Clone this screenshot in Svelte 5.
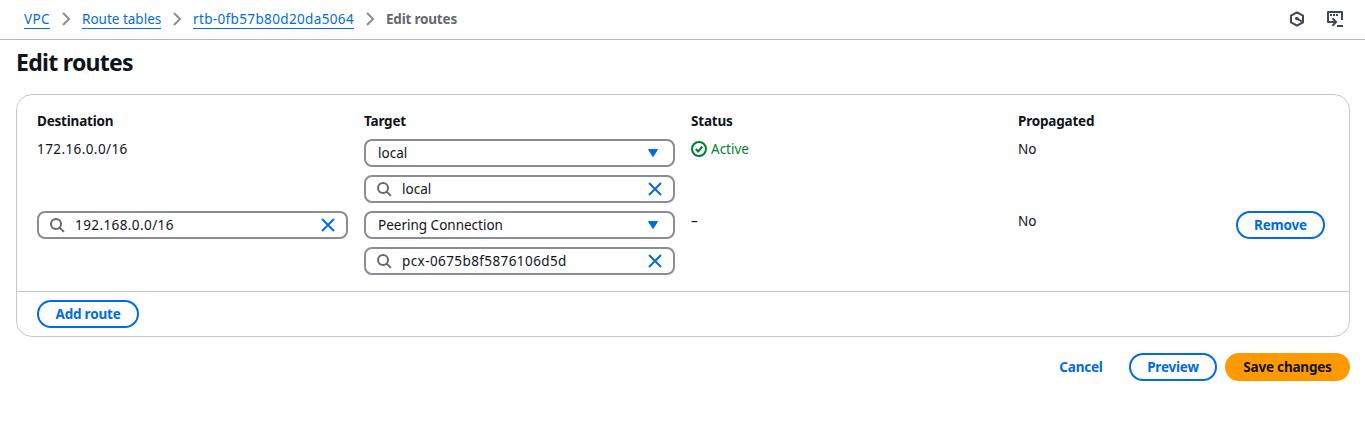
<script>
  const crumbs = [
    { label: 'VPC', cls: 'c1' },
    { label: 'Route tables', cls: 'c2' },
    { label: 'rtb-0fb57b80d20da5064', cls: 'c3' },
  ];
  const routes = [
    { destination: '172.16.0.0/16', editable: false, type: 'local', target: 'local', active: true, propagated: 'No' },
    { destination: '192.168.0.0/16', editable: true, type: 'Peering Connection', target: 'pcx-0675b8f5876106d5d', active: false, propagated: 'No' },
  ];
</script>

{#snippet search(value)}
  <div class="field">
    <svg class="glass" width="16" height="16" viewBox="0 0 16 16" fill="none" stroke="#656871" stroke-width="2"><circle cx="7" cy="7" r="5" /><path d="m10.6 10.6 4.3 4.3" /></svg>
    <span class="value" class:wide={/\d/.test(value)}>{value}</span>
    <svg class="clear" width="16" height="16" viewBox="0 0 16 16" fill="none" stroke="#006ce0" stroke-width="2"><path d="m2 2 12 12M14 2 2 14" /></svg>
  </div>
{/snippet}

<header>
  <nav>
    {#each crumbs as c}
      <span class="link {c.cls}">{c.label}</span>
      <svg class="chev" width="16" height="16" viewBox="0 0 16 16" fill="none" stroke="#8c8c94" stroke-width="2"><path d="m5 2 6 6-6 6" /></svg>
    {/each}
    <span class="current">Edit routes</span>
  </nav>
  <div class="tools">
    <svg width="16" height="16" viewBox="0 0 16 16" fill="none" stroke="#424650" stroke-width="2"><path d="M8 1.4 14 4.7v6.6l-6 3.3-6-3.3V4.7z" stroke-linejoin="round" /><path d="m8 7.7 4.8 2.8" /><circle cx="7.8" cy="7.5" r="1.8" fill="#424650" stroke="none" /></svg>
    <svg width="18" height="18" viewBox="0 0 18 18" fill="none" stroke="#424650" stroke-width="2"><path d="M5 12H2V2h14v8" stroke-linejoin="round" /><path d="M4 5h2m1 0h2m1 0h2" /><path d="M4 12h6M6.5 8.2l3.6 3.8-3.6 3.8M11 16h6" /></svg>
  </div>
</header>

<main>
  <h1>Edit routes</h1>
  <section class="card">
    <div class="body">
      <div class="row heads">
        <span>Destination</span><span>Target</span><span>Status</span><span>Propagated</span>
      </div>
      {#each routes as r}
        <div class="row">
          <div>
            {#if r.editable}{@render search(r.destination)}{:else}<span class="text wide">{r.destination}</span>{/if}
          </div>
          <div class="stack">
            <div class="field select">
              <span class="value">{r.type}</span>
              <svg width="16" height="16" viewBox="0 0 16 16"><path d="M3.5 4.6h9L8 11.6z" fill="#006ce0" stroke="#006ce0" stroke-width="1" stroke-linejoin="round" /></svg>
            </div>
            {@render search(r.target)}
          </div>
          <div>
            {#if r.active}
              <span class="text status">
                <svg width="16" height="16" viewBox="0 0 16 16" fill="none" stroke="#00802f" stroke-width="2"><circle cx="8" cy="8" r="7" /><path d="m4.8 8 2.3 2.4 4.2-4.9" /></svg>
                <span>Active</span>
              </span>
            {:else}
              <span class="text">–</span>
            {/if}
          </div>
          <div><span class="text">{r.propagated}</span></div>
          {#if r.editable}<button class="remove">Remove</button>{/if}
        </div>
      {/each}
    </div>
    <footer><button class="add">Add route</button></footer>
  </section>
  <div class="actions">
    <button class="plain">Cancel</button>
    <button class="preview">Preview</button>
    <button class="primary">Save changes</button>
  </div>
</main>

<style>
  :global(body) { background: #fff; }
  :global(#app) { font: 13.5px/20px "Noto Sans", "Open Sans", sans-serif; color: #0f141a; }
  header { height: 39px; border-bottom: 1px solid #b4b4bb; display: flex; justify-content: space-between; padding: 0 21px 0 24px; }
  nav { display: flex; align-items: center; height: 38px; }
  .link { color: #006ce0; height: 18px; line-height: 18px; border-bottom: 1px solid #006ce0; white-space: nowrap; }
  .c1 { width: 26px; letter-spacing: 0.4px; }
  .c2 { width: 79px; }
  .c3 { width: 161px; letter-spacing: 0.36px; }
  .wide { letter-spacing: 0.41px; }
  .chev { margin: 0 8px; }
  .current { color: #656871; font-weight: 700; font-size: 13.5px; letter-spacing: -0.2px; }
  .tools { display: flex; align-items: center; gap: 21px; height: 38px; }
  main { padding: 0 15px 0 16px; }
  h1 { margin: 7px 0 17px; font-size: 23px; line-height: 30px; font-weight: 700; letter-spacing: -0.7px; }
  .card { border: 1px solid #c6c6cd; border-radius: 16px; }
  .body { padding: 16px 20px; display: flex; flex-direction: column; gap: 8px; }
  .row { display: grid; grid-template-columns: 311px 311px 311px 202px auto; column-gap: 16px; align-items: start; }
  .heads { height: 20px; font-weight: 700; font-size: 13.5px; letter-spacing: -0.2px; }
  .stack { display: grid; gap: 8px; }
  .text { display: block; }
  .status { display: flex; align-items: center; gap: 4px; color: #00802f; }
  .field { box-sizing: border-box; height: 28px; border: 2px solid #8c8c94; border-radius: 8px; display: flex; align-items: center; padding: 0 10px; }
  .select { padding: 0 12px; }
  .value { flex: 1; }
  .glass { margin-right: 10px; }
  button { box-sizing: border-box; height: 28px; border: 2px solid #006ce0; border-radius: 20px; background: #fff; color: #006ce0; font: 700 13.5px/20px "Noto Sans", sans-serif; letter-spacing: -0.2px; padding: 0; white-space: nowrap; }
  .remove { width: 89px; margin-left: 0; justify-self: start; }
  footer { border-top: 1px solid #c6c6cd; padding: 8px 20px; }
  .add { width: 102px; display: block; }
  .actions { display: flex; justify-content: flex-end; gap: 8px; margin-top: 16px; }
  .plain { border-color: transparent; width: 80px; }
  .preview { width: 88px; }
  .primary { width: 125px; background: #ff9900; border-color: #ff9900; color: #0f141a; }
</style>
